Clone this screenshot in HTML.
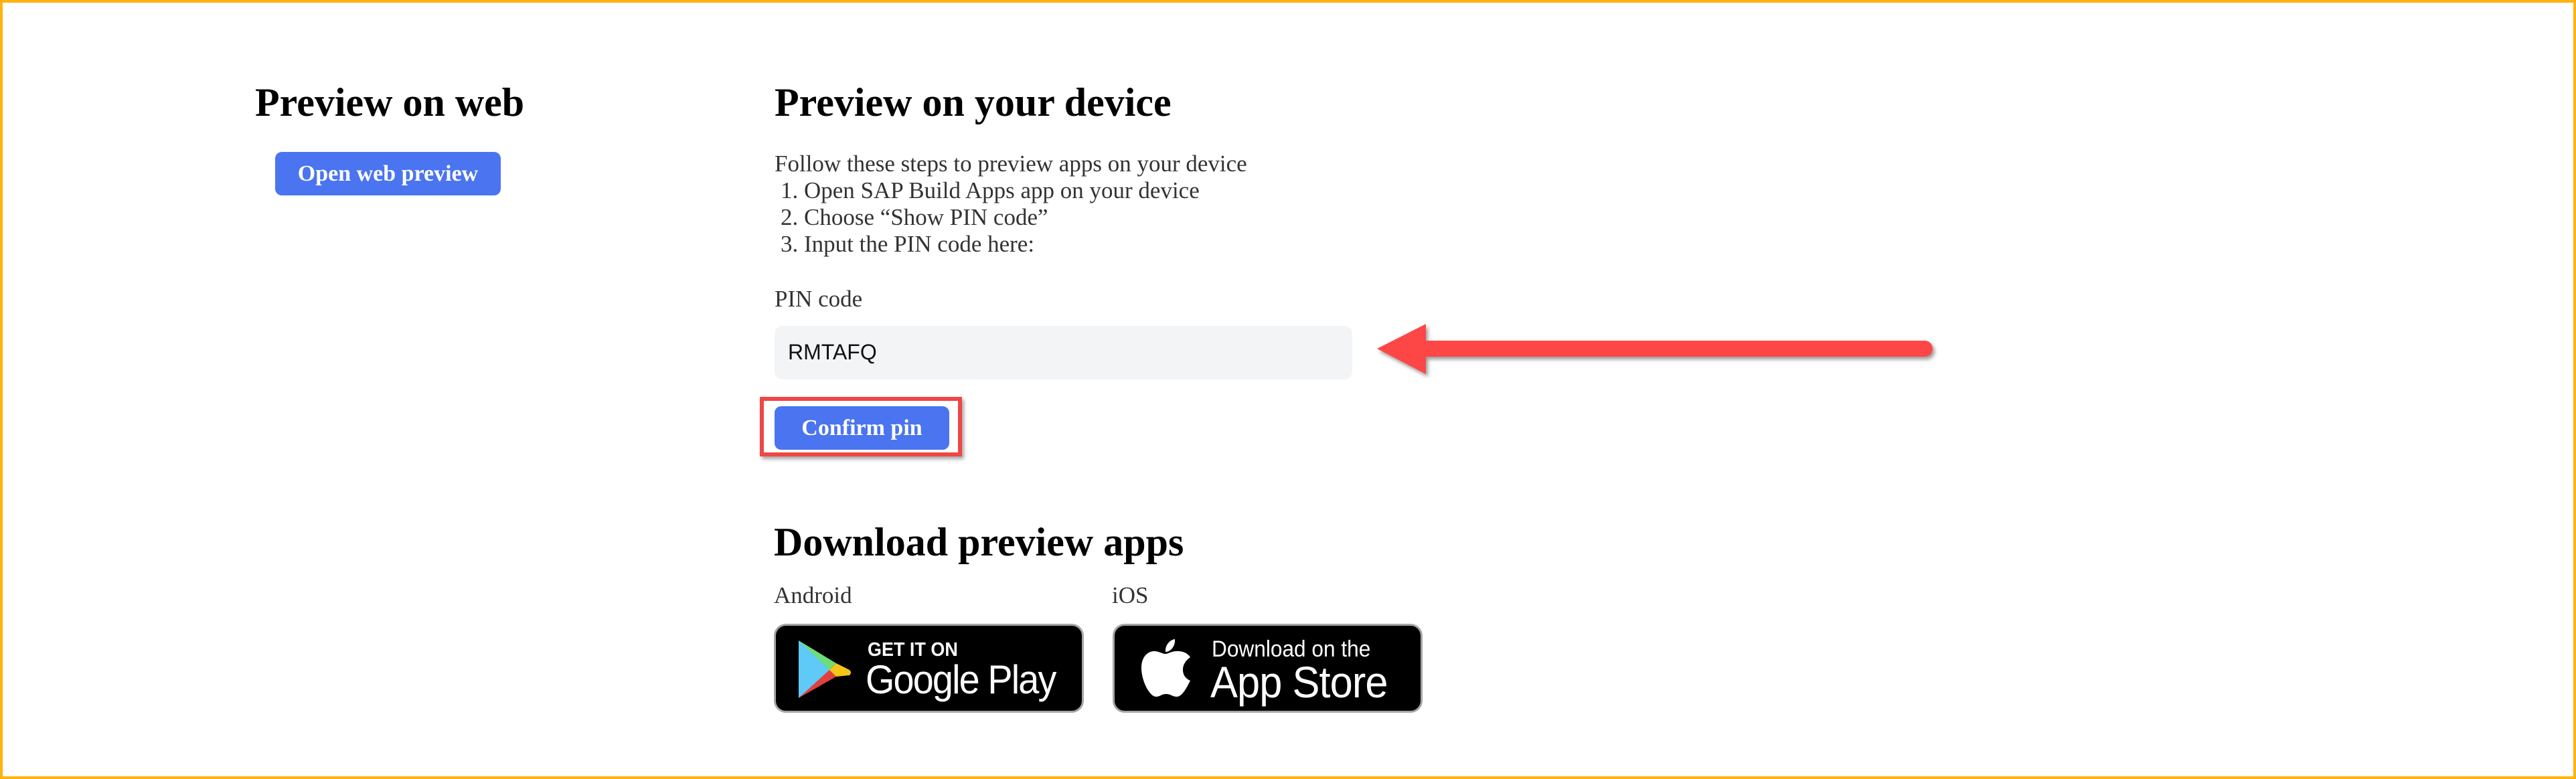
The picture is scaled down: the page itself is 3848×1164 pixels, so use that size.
<!DOCTYPE html>
<html><head><meta charset="utf-8"><style>
html,body{margin:0;padding:0}
body{width:3848px;height:1164px;position:relative;overflow:hidden;background:#fff;font-family:"Liberation Serif",serif}
.frame{position:absolute;left:0;top:0;width:3840px;height:1156px;border:4px solid #FFB310}
.a{position:absolute;white-space:nowrap}
h2{margin:0;font-size:60px;font-weight:bold;color:#000;line-height:1}
.btn{position:absolute;background:#4a74f0;color:#fff;font-weight:bold;font-size:34px;border-radius:10px;display:flex;align-items:center;justify-content:center}
.t{font-size:35px;color:#333;line-height:40px}
.badge{position:absolute;top:932px;width:457px;height:127px;background:#000;border:3px solid #a6a6a6;border-radius:18px;color:#fff;font-family:"Liberation Sans",sans-serif}
</style></head><body>
<div class="frame"></div>
<h2 class="a" style="left:381px;top:123px">Preview on web</h2>
<div class="btn" style="left:411px;top:227px;width:337px;height:65px">Open web preview</div>

<h2 class="a" style="left:1157px;top:123px">Preview on your device</h2>
<div class="a t" style="left:1157px;top:225px">Follow these steps to preview apps on your device</div>
<div class="a t" style="left:1166px;top:265px">1. Open SAP Build Apps app on your device</div>
<div class="a t" style="left:1166px;top:305px">2. Choose “Show PIN code”</div>
<div class="a t" style="left:1166px;top:345px">3. Input the PIN code here:</div>
<div class="a t" style="left:1157px;top:427px">PIN code</div>
<div class="a" style="left:1157px;top:487px;width:863px;height:80px;background:#f3f4f6;border-radius:12px"></div>
<div class="a" style="left:1177px;top:508px;font-family:'Liberation Sans',sans-serif;font-size:32px;color:#111">RMTAFQ</div>

<div class="a" style="left:1135px;top:593px;width:290px;height:77px;border:6px solid #f04646;box-shadow:3px 4px 5px rgba(0,0,0,.35)"></div>
<div class="btn" style="left:1157px;top:607px;width:261px;height:65px">Confirm pin</div>

<svg class="a" style="left:2040px;top:470px" width="870" height="110">
<defs><filter id="s"><feDropShadow dx="3" dy="4" stdDeviation="3" flood-opacity=".4"/></filter></defs>
<g filter="url(#s)" fill="#fd4646">
<path d="M17 51 L90 14 L90 39 L835 39 A12 12 0 0 1 835 63 L90 63 L90 89 Z"/>
</g></svg>

<h2 class="a" style="left:1156px;top:780px">Download preview apps</h2>
<div class="a t" style="left:1156px;top:870px">Android</div>
<div class="a t" style="left:1661px;top:870px">iOS</div>

<div class="badge" style="left:1156px">
<svg style="position:absolute;left:32px;top:20px" width="84" height="90" viewBox="0 0 84 90">
<path d="M2 2 L50 46 L2 88 Z" fill="#5fc9f8"/>
<path d="M2 2 L58 36 L48 46 Z" fill="#6ddc7a"/>
<path d="M2 88 L48 46 L58 56 Z" fill="#e2403f"/>
<path d="M58 36 L78 46 Q82 50 78 54 L58 56 L48 46 Z" fill="#f5c518"/>
</svg>
<div class="a" style="left:137px;top:20px;font-size:29px;font-weight:bold;transform:scaleX(.93);transform-origin:left">GET IT ON</div>
<div class="a" style="left:134px;top:46px;font-size:60px;letter-spacing:-2px;transform:scaleX(.93);transform-origin:left">Google Play</div>
</div>

<div class="badge" style="left:1662px">
<svg style="position:absolute;left:38px;top:18px" width="78" height="90" viewBox="0 0 78 90">
<path d="M52 2 C53 12 46 21 38 21 C37 12 44 3 52 2 Z" fill="#fff"/>
<path d="M64 48 C64 36 74 30 75 29 C69 20 59 20 55 20 C47 20 42 24 38 24 C33 24 28 20 21 20 C12 20 2 28 2 45 C2 64 14 88 24 88 C30 88 32 84 39 84 C46 84 48 88 55 88 C63 88 70 74 75 64 C66 60 64 53 64 48 Z" fill="#fff"/>
</svg>
<div class="a" style="left:145px;top:16px;font-size:34px;transform:scaleX(.93);transform-origin:left">Download on the</div>
<div class="a" style="left:143px;top:46px;font-size:66px;letter-spacing:-1px;transform:scaleX(.93);transform-origin:left">App Store</div>
</div>
</body></html>
